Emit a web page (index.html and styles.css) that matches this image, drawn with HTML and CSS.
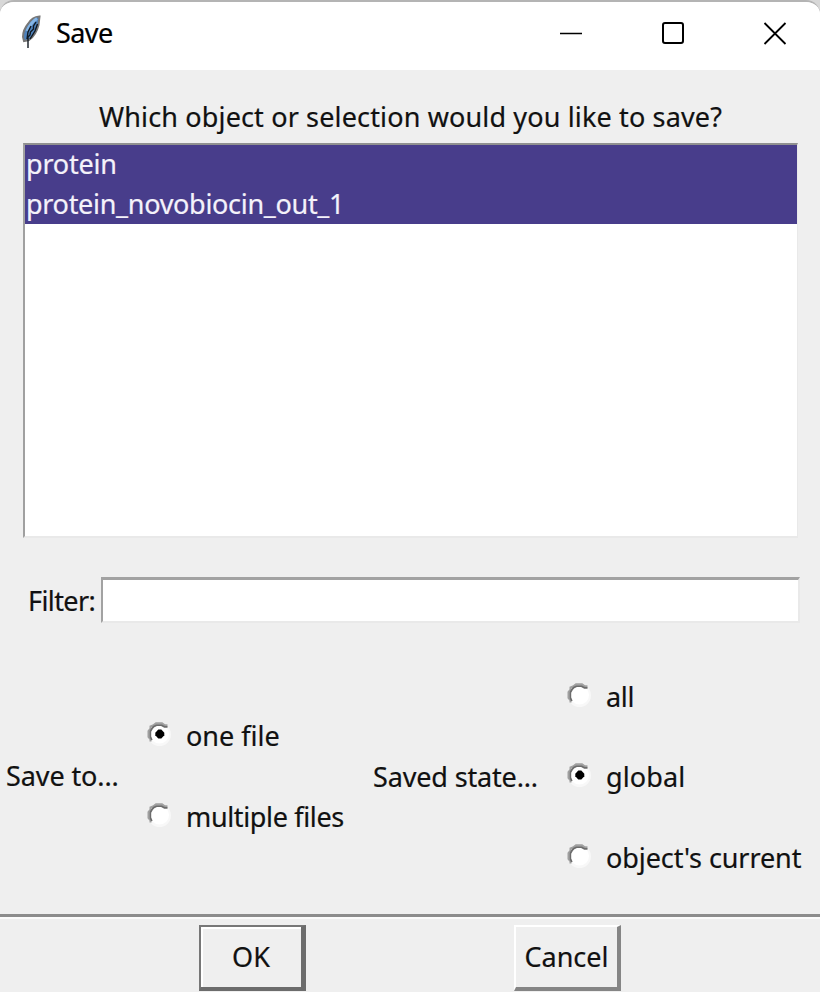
FILE: index.html
```
<!DOCTYPE html>
<html lang="en">
<head>
<meta charset="utf-8">
<title>Save</title>
<link rel="stylesheet" href="styles.css">
</head>
<body>
<main class="window">
  <header class="titlebar">
    <svg class="feather" width="22" height="36" viewBox="0 0 22 36">
      <path d="M19.500 1.500 Q12 2 8 9 Q3 15 3 22 L4 26 L9 25 Q16 20 18.500 10 Z" fill="#4f83bd" stroke="#777" stroke-width="2"/>
      <path d="M17 3.500 Q11 7 7 16" fill="none" stroke="#84b5e6" stroke-width="3"/>
      <path d="M16 7 L13.500 11 L13.500 14 L10.500 17 L10 20 L8 22 V33 M11 11 L8 17 L7 24 M17.500 9 L15 16 L10 24" fill="none" stroke="#101820" stroke-width="1.400"/>
    </svg>
    <h1 class="title">Save</h1>
    <div class="controls">
      <svg width="24" height="24" viewBox="0 0 24 24"><path d="M1 12.500H23" stroke="#000" stroke-width="1.600"/></svg>
      <svg width="24" height="24" viewBox="0 0 24 24"><rect x="2" y="2" width="20" height="20" rx="2" fill="none" stroke="#000" stroke-width="2"/></svg>
      <svg width="24" height="24" viewBox="0 0 24 24"><path d="M1.500 2L22.500 23M22.500 2L1.500 23" stroke="#000" stroke-width="1.800"/></svg>
    </div>
  </header>
  <p class="question">Which object or selection would you like to save?</p>
  <ul class="list">
    <li class="item"><span class="item-short">protein</span></li>
    <li class="item"><span class="item-long">protein_novobiocin_out_1</span></li>
  </ul>
  <div class="filter"><label class="filter-label" for="filter">Filter:</label><input class="entry" id="filter" type="text"></div>
  <section class="options">
    <span class="caption caption-save">Save to...</span>
    <div class="group group-save">
      <label class="choice"><svg class="radio" width="26" height="26"><use href="#well"/><use href="#dot"/></svg><span class="t-one">one file</span></label>
      <label class="choice"><svg class="radio" width="26" height="26"><use href="#well"/></svg><span class="t-multi">multiple files</span></label>
    </div>
    <span class="caption caption-state">Saved state...</span>
    <div class="group">
      <label class="choice"><svg class="radio" width="26" height="26"><use href="#well"/></svg><span class="t-all">all</span></label>
      <label class="choice"><svg class="radio" width="26" height="26"><use href="#well"/><use href="#dot"/></svg><span class="t-global">global</span></label>
      <label class="choice"><svg class="radio" width="26" height="26"><use href="#well"/></svg><span class="t-object">object's current</span></label>
    </div>
  </section>
  <footer class="actions">
    <button class="button ok"><span>OK</span></button>
    <button class="button cancel"><span>Cancel</span></button>
  </footer>
</main>
<svg class="defs" width="0" height="0">
  <defs>
    <g id="well">
      <circle cx="13.500" cy="13.500" r="11.500" fill="#f8f8f8"/>
      <circle cx="13.500" cy="13" r="9.500" fill="#fff"/>
      <path d="M4.500 20.500V18.500L2.500 16V10L4.500 7.500V5.500L7 4.500L10 2.300H16L18.500 4L21.500 4.500" fill="none" stroke="#a0a0a0" stroke-width="2"/>
      <path d="M5.800 19L4.300 15.500V10.500L6 7.500L7.500 5.800L10.500 4.200H15.500L18.500 5.800H21.500" fill="none" stroke="#6c6c6c" stroke-width="1.800"/>
    </g>
    <path id="dot" d="M12.300 8.500H15.300L18.300 11.700V14.300L15.300 17.500H12.300L9.300 14.300V11.700Z" fill="#000"/>
  </defs>
</svg>
</body>
</html>
```
FILE: styles.css
```
* { box-sizing: border-box; }
body { margin: 0; background: #d8d8d8; color: #111; font: 27px/40px "Noto Sans", "Open Sans", sans-serif; -webkit-text-stroke: 0.2px; }
.window { width: 820px; height: 992px; overflow: hidden; display: flex; flex-direction: column; background: #efefef; border-top: 2px solid #b4b4b4; border-radius: 14px 14px 0 0; white-space: nowrap; }
.titlebar { height: 68px; flex: none; display: flex; align-items: center; background: #fff; padding: 0 33px 6px 20px; }
.title { margin: 0 0 0 14px; font-size: 27px; font-weight: 400; letter-spacing: -0.6px; color: #000; }
.controls { margin-left: auto; display: flex; gap: 78px; }
.question { margin: 27px 0 0; padding-left: 99px; height: 46px; letter-spacing: 0.145px; }
.list { list-style: none; margin: 0 0 0 23px; padding: 0; width: 775px; height: 395px; flex: none; background: #fff; border: 2px solid #e9e9e9; border-top-color: #909090; border-left-color: #a0a0a0; border-right-width: 1px; }
.item { height: 39.500px; line-height: 38px; background: #483d8b; color: #f4f2fa; padding-left: 1px; }
.item-short { letter-spacing: -0.2px; }
.item-long { letter-spacing: -0.3px; }
.filter { display: flex; margin: 39px 20px 0 28px; height: 46px; flex: none; }
.filter-label { width: 73px; line-height: 48px; letter-spacing: -0.6px; }
.entry { flex: 1; min-width: 0; border: 2px solid #e9e9e9; border-top: 3px solid #a2a2a2; border-left-color: #a2a2a2; border-radius: 0; background: #fff; outline: none; font: inherit; }
.options { display: flex; align-items: center; height: 240px; margin-top: 34px; flex: none; padding-left: 6px; }
.caption-save { width: 140px; letter-spacing: -0.1px; padding-bottom: 3px; }
.group { display: grid; grid-auto-rows: 80.500px; align-items: center; }
.group-save { width: 227px; padding-bottom: 1px; }
.caption-state { width: 193px; letter-spacing: -0.15px; }
.choice { display: flex; align-items: center; gap: 14px; }
.radio { flex: none; margin-bottom: 4px; }
.t-multi { letter-spacing: -0.35px; }
.t-all { letter-spacing: -0.3px; }
.t-object { letter-spacing: -0.08px; }
.t-global { letter-spacing: 0.1px; }
.actions { display: flex; align-items: flex-start; margin-top: auto; height: 78px; flex: none; padding: 8px 0 0 199px; border-top: 3px solid #8c8c8c; box-shadow: inset 0 2px #fbfbfb; }
.button { font: inherit; color: inherit; background: #efefef; padding: 0; border-radius: 0; height: 66px; }
.ok { width: 107px; border: 2px solid #777; border-width: 2px 5px 4px 2px; border-right-color: #6c6c6c; border-bottom-color: #6c6c6c; box-shadow: inset 2px 2px #fff; }
.cancel { width: 107px; margin-left: 208px; border: 2px solid #fff; border-right: 4px solid #858585; border-bottom: 4px solid #858585; }
.defs { display: none; }
```
